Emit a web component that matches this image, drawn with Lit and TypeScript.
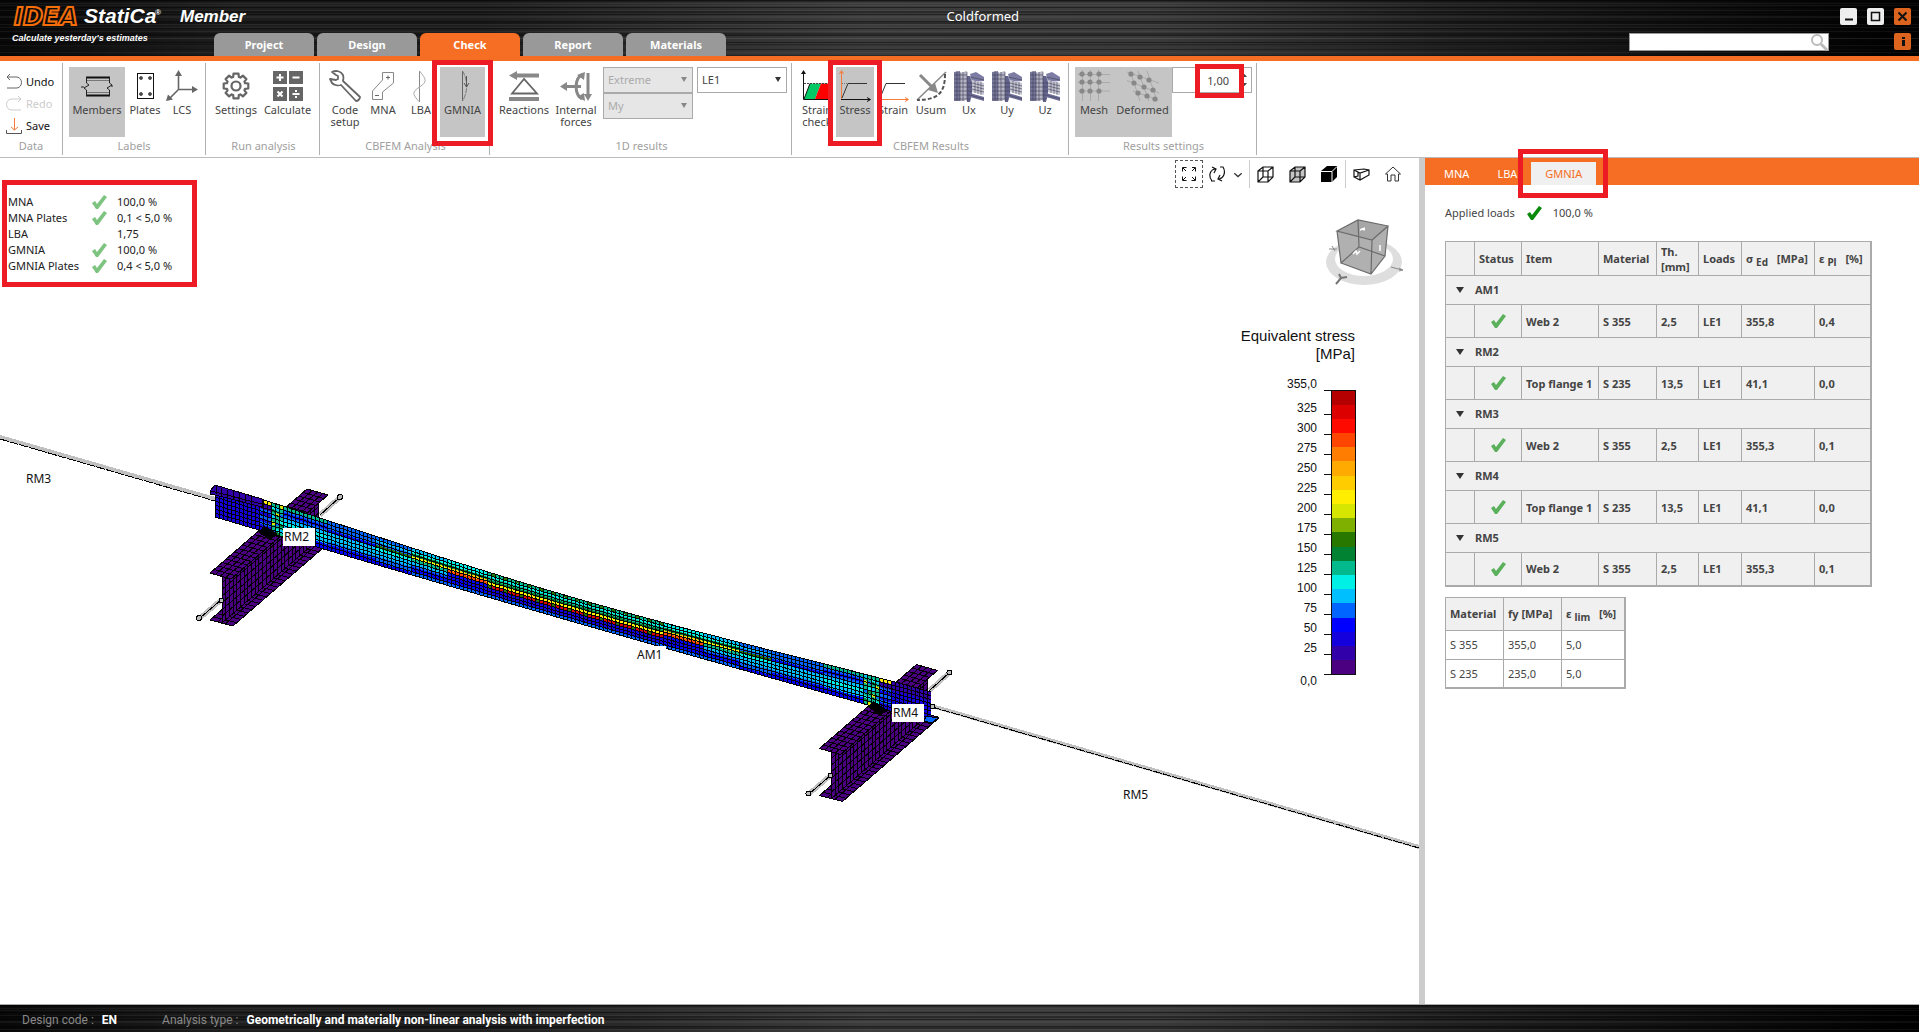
import { LitElement, html, svg, css, nothing } from "lit";
import { customElement } from "lit/decorators.js";
import { classMap } from "lit/directives/class-map.js";

/* ---------- ribbon icons, drawn on a 32 x 32 grid ---------- */

const meshBlock = svg`
  <path d="M1 2l6-1v30H1z" fill="#77779a"/>
  <path d="M7 3l7-2v28l-3 2H7z" fill="#b4b4c4"/>
  <path d="M14 6h3l2 6v12l-2 8h-3z" fill="#62628a"/>
  <path d="M17 4l6-2 8 5v4l-12 1z" fill="#7c7ca4"/>
  <path d="M19 10l12 3v12l-12-3z" fill="#c8c8d4"/>
  <path d="M17 23l14 4v4l-14-4z" fill="#6c6c96"/>
  <path d="M1 5h13M1 9h13M1 13h18M1 17h18M1 21h18M1 25h16M1 29h16M4 1v30M7 2v29M10 2v29M14 2v29M19 13l12 3M19 16l12 3M19 19l12 3M22 11v12M25 12v12M28 12v13M17 7l14 3M17 25l14 4"
    stroke="#3f3f58" stroke-width="0.6" fill="none"/>`;

const gear = (() => {
  const pts: string[] = [];
  for (let i = 0; i < 8; i++) {
    const base = (i * Math.PI) / 4;
    const steps: [number, number][] = [[-0.3, 9.5], [-0.2, 12.5], [0.2, 12.5], [0.3, 9.5]];
    for (const [da, r] of steps) {
      pts.push(`${(16 + r * Math.sin(base + da)).toFixed(1)},${(16 - r * Math.cos(base + da)).toFixed(1)}`);
    }
  }
  return pts.join(" ");
})();

const deformedDots = [
  [[4, 4], [13, 7], [22, 10]],
  [[7, 13], [17, 17], [26, 20]],
  [[11, 23], [20, 26], [28, 29]],
];

const icons: Record<string, unknown> = {
  members: svg`
    <path d="M5 7.5H29M5 25.500H29" stroke="#111" stroke-width="2"/>
    <path d="M5 10.500H29M5 22.500H29" stroke="#777"/>
    <path d="M5.500 7V13L8 15L3 18L5.500 20V26M0 17H3M28.500 7V13L31 15L26 18L28.500 20V26M30 16H32" fill="none" stroke="#222"/>`,
  plates: svg`
    <rect x="8.500" y="3.500" width="16" height="25" fill="none" stroke="#111"/>
    ${[[12, 8], [21, 8], [12, 24], [21, 24]].map(([x, y]) => svg`<circle cx=${x} cy=${y} r="1.500" fill="#555" stroke="#111" stroke-width="0.6"/>`)}`,
  lcs: svg`
    <path d="M12.500 5V19.500H28M12.500 19.500L4 28" fill="none" stroke="#666" stroke-width="1.600"/>
    <path d="M12.500 0L16 6H9zM32 19.500L26 16V23zM0 31L2 24.500L7 29.500z" fill="#666"/>`,
  settings: svg`
    <polygon points=${gear} fill="none" stroke="#666" stroke-width="2.200" stroke-linejoin="round"/>
    <circle cx="16" cy="16" r="4.500" fill="none" stroke="#666" stroke-width="2.200"/>`,
  calculate: svg`
    <path d="M1 1h14v13H1zM17 1h14v13H17zM1 17h14v14H1zM17 17h14v14H17z" fill="#666"/>
    <path d="M4.500 7.500h7M8 4v7M20.500 7.500h7M5.500 21.500l5 5M10.500 21.500l-5 5M20.500 24h7" stroke="#fff" stroke-width="2"/>
    <path d="M23 20h2v2h-2zM23 26h2v2h-2z" fill="#fff"/>`,
  wrench: svg`
    <path d="M3 2C7 0 12 1 14 5C15 8 14 10 14 11L31 27C31 29 29 31 27 31L12 15C9 16 5 15 3 13L1 9L7 10L9 9L9 6L7 5z" fill="none" stroke="#666" stroke-width="1.800" stroke-linejoin="round"/>`,
  mna: svg`
    <path d="M15.500 2.500H26.500V13L15.500 22V29.500H5.500V21L15.500 10z" fill="none" stroke="#888"/>
    <path d="M19 7.500h4M21 5.500v4M8 25.500h4" stroke="#666"/>`,
  lba: svg`
    <path d="M14.500 1V32" stroke="#888"/>
    <path d="M14.500 1C22 10 22 12 14.500 17C7 22 7 24 14.500 32" fill="none" stroke="#aaa"/>`,
  gmnia: svg`
    <path d="M15.500 1V31" stroke="#666"/>
    <path d="M15.500 1C21 10 21 22 15.500 31" fill="none" stroke="#777" stroke-dasharray="5 1"/>
    <path d="M19.500 6V17M17 13l2.500 4l2.500-4" fill="none" stroke="#555"/>`,
  reactions: svg`
    <path d="M8 5.500H31" stroke="#888" stroke-width="4"/><path d="M1 5.500L9 1V10z" fill="#888"/>
    <path d="M16 9L4 23.500H29z" fill="none" stroke="#666" stroke-width="1.800"/>
    <path d="M1 29H31" stroke="#888" stroke-width="4"/>`,
  forces: svg`
    <path d="M6 16.500H21M28 3V27" stroke="#888" stroke-width="3"/>
    <path d="M23 4C14 8 14 24 22 29" fill="none" stroke="#888" stroke-width="3"/>
    <path d="M0 16.500L7 12V21zM17 5L25 2L24 10zM17 27L25 31L24 23zM24 24H32L28 31z" fill="#888"/>`,
  strainCheck: svg`
    <path d="M3 29L9 13.500H20L14 29z" fill="#00c864"/><path d="M14 29L20 13.500H34V29z" fill="#f00"/>
    <path d="M3 13.500H34" stroke="#444" stroke-dasharray="2 1"/>
    <path d="M2.500 3V29.500H34M9 13.500L3 29" fill="none" stroke="#111"/><path d="M2.500 0L5 4H0z" fill="#111"/>`,
  stress: svg`
    <path d="M2.500 2V29" stroke="#f47b3a"/><path d="M0.500 4L2.500 0.500L4.500 4" fill="none" stroke="#f47b3a"/>
    <path d="M2 29.500H31M28 27.500L31.500 29.500L28 31.500" fill="none" stroke="#111"/>
    <path d="M3 28L9 13.500H28" fill="none" stroke="#333"/><path d="M3 13.500H9" stroke="#777" stroke-dasharray="1 1"/>`,
  strain: svg`
    <path d="M2.500 1V29" stroke="#333"/>
    <path d="M2 29.500H31M28 27.500L31.500 29.500L28 31.500" fill="none" stroke="#f47b3a"/>
    <path d="M3 28L9 13.500H28" fill="none" stroke="#333"/>`,
  usum: svg`
    <path d="M31 2L2 30" stroke="#888" stroke-width="1.500"/><path d="M5 5L18 18" stroke="#888" stroke-width="3"/>
    <path d="M23 23L13 20L20 13z" fill="#888"/>
    <path d="M30 4C30 22 24 30 2 30" fill="none" stroke="#555" stroke-width="2" stroke-dasharray="4 2"/>`,
  block: meshBlock,
  mesh: svg`
    <path d="M0 4.500H32M0 12.500H32M0 21H32M4.500 0V31M12.500 0V31M20.500 0V31" stroke="#aaa"/>
    ${[4, 12, 21].map((y) => [4, 12, 21].map((x) => svg`<circle cx=${x} cy=${y} r="2.600" fill="#888"/>`))}`,
  deformed: svg`
    <path d="M0 2L32 13M0 10.500L32 23M6 21L31 30M3 1L13 31M11 1L22 31M20 1L30 31" stroke="#aaa"/>
    ${deformedDots.flat().map(([x, y]) => svg`<circle cx=${x} cy=${y} r="2.600" fill="#888"/>`)}`,
};

const check = svg`<path d="M1 9L4 7L6 10L13 1L16 3L7 15H5z" fill="currentColor"/>`;
const tick = (cls: string) => html`<svg class="tick ${cls}" viewBox="0 0 17 16" role="img" aria-label="OK">${check}</svg>`;

interface Tool { icon: string; label: string; width: number; on?: boolean; marked?: boolean }

const labelTools: Tool[] = [
  { icon: "members", label: "Members", width: 56, on: true },
  { icon: "plates", label: "Plates", width: 40 },
  { icon: "lcs", label: "LCS", width: 34 },
];
const runTools: Tool[] = [
  { icon: "settings", label: "Settings", width: 48 },
  { icon: "calculate", label: "Calculate", width: 55 },
];
const analysisTools: Tool[] = [
  { icon: "wrench", label: "Code setup", width: 38 },
  { icon: "mna", label: "MNA", width: 38 },
  { icon: "lba", label: "LBA", width: 38 },
  { icon: "gmnia", label: "GMNIA", width: 45, on: true, marked: true },
];
const resultTools: Tool[] = [
  { icon: "reactions", label: "Reactions", width: 56 },
  { icon: "forces", label: "Internal forces", width: 48 },
];
const cbfemTools: Tool[] = [
  { icon: "strainCheck", label: "Strain check", width: 38 },
  { icon: "stress", label: "Stress", width: 38, on: true, marked: true },
  { icon: "strain", label: "Strain", width: 38 },
  { icon: "usum", label: "Usum", width: 38 },
  { icon: "block", label: "Ux", width: 38 },
  { icon: "block", label: "Uy", width: 38 },
  { icon: "block", label: "Uz", width: 38 },
];
const settingTools: Tool[] = [
  { icon: "mesh", label: "Mesh", width: 38, on: true },
  { icon: "deformed", label: "Deformed", width: 59, on: true },
];

@customElement("app-ribbon")
class AppRibbon extends LitElement {
  static styles = css`
    :host { display: block; background: #fff; border-bottom: 1px solid #bbb; }
    .bar { display: flex; padding: 2px 0; }
    .group { display: flex; flex-direction: column; border-right: 1px solid #b0b0b0; padding: 4px 4px 0 6px; }
    .even { padding-right: 6px; }
    .row { display: flex; height: 70px; align-items: flex-start; }
    .caption { text-align: center; line-height: 18px; height: 18px; color: #a0a0a0; }
    button { font: inherit; color: #444; background: none; border: 0; padding: 0; margin: 0; }
    .tool { position: relative; display: flex; flex-direction: column; align-items: center; gap: 2px; height: 70px; padding-top: 3px; line-height: 12px; flex: none; }
    .tool svg { width: 32px; height: 32px; flex: none; }
    .on { background: #c5c5c5; }
    .marked { z-index: 2; box-shadow: 0 0 0 3px #fff; }
    .marked::after { content: ""; position: absolute; inset: -7px -8px -9px -8px; border: 5px solid #ed1c24; }
    .data { width: 62px; padding: 8px 0 0; }
    .small { display: flex; align-items: center; gap: 4px; height: 22px; padding-left: 6px; color: #111; }
    .small svg { width: 16px; height: 16px; }
    .small:disabled { color: #ccc; }
    .dataRows { height: 66px; }
    .combo { position: relative; display: block; width: 90px; height: 26px; margin-left: 3px; }
    .combo::after { content: ""; position: absolute; right: 6px; top: 10px; border: 3px solid transparent; border-top: 5px solid #333; border-bottom: 0; pointer-events: none; }
    .combo.off::after { border-top-color: #888; }
    select { appearance: none; box-sizing: border-box; width: 90px; height: 26px; border: 1px solid #aaa; border-radius: 0; background: #fff; color: #444; font: inherit; padding: 0 4px; opacity: 1; }
    select:disabled { background: #e6e6e6; color: #aaa; opacity: 1; }
    .case { margin-left: 4px; }
    .spin { position: relative; width: 80px; height: 26px; }
    .spin input { box-sizing: border-box; width: 80px; height: 26px; border: 1px solid #aaa; font: inherit; color: #444; padding: 0 22px 0 0; text-align: right; }
    .spin::after { content: ""; position: absolute; left: 23px; top: -3px; width: 39px; height: 24px; border: 5px solid #ed1c24; pointer-events: none; }
    .spin svg { position: absolute; right: 5px; top: 6px; width: 5px; height: 14px; }
  `;

  private tools(list: Tool[]) {
    return list.map((t) => html`
      <button class=${classMap({ tool: true, on: !!t.on, marked: !!t.marked })} style="width:${t.width}px" aria-pressed=${t.on ? "true" : "false"}>
        <svg viewBox="0 0 32 32" aria-hidden="true">${icons[t.icon]}</svg><span>${t.label}</span>
      </button>`);
  }

  render() {
    return html`<div class="bar">
      <section class="group data">
        <div class="dataRows">
          <button class="small"><svg viewBox="0 0 16 16"><path d="M1 3H11C17 4 17 13 11 14H1M4 0L1 3L4 6" fill="none" stroke="#666"/></svg>Undo</button>
          <button class="small" disabled><svg viewBox="0 0 16 16"><path d="M15 3H5C-1 4 -1 13 5 14H15M12 0L15 3L12 6" fill="none" stroke="#ccc"/></svg>Redo</button>
          <button class="small"><svg viewBox="0 0 16 16"><path d="M0.500 12V15.500H15.500V12" fill="none" stroke="#555"/><path d="M8.500 0V12M5 9L8.500 12L12 9" fill="none" stroke="#f47b3a"/></svg>Save</button>
        </div>
        <div class="caption">Data</div>
      </section>
      <section class="group even"><div class="row">${this.tools(labelTools)}</div><div class="caption">Labels</div></section>
      <section class="group"><div class="row">${this.tools(runTools)}</div><div class="caption">Run analysis</div></section>
      <section class="group"><div class="row">${this.tools(analysisTools)}</div><div class="caption">CBFEM Analysis</div></section>
      <section class="group">
        <div class="row">
          ${this.tools(resultTools)}
          <div>
            <label class="combo off"><select disabled aria-label="Evaluation"><option>Extreme</option></select></label>
            <label class="combo off"><select disabled aria-label="Component"><option>My</option></select></label>
          </div>
          <label class="combo case"><select aria-label="Load effect"><option>LE1</option></select></label>
        </div>
        <div class="caption">1D results</div>
      </section>
      <section class="group"><div class="row">${this.tools(cbfemTools)}</div><div class="caption">CBFEM Results</div></section>
      <section class="group">
        <div class="row">
          ${this.tools(settingTools)}
          <div class="spin"><input aria-label="Deformation scale" value="1,00"><svg viewBox="0 0 5 14"><path d="M2.500 1L5 4H0zM2.500 13L5 10H0z" fill="#444"/></svg></div>
        </div>
        <div class="caption">Results settings</div>
      </section>
    </div>`;
  }
}

/* ---------- finite element model ---------- */

const palette = ["#4b0082", "#3200a8", "#1400dc", "#0000ff", "#0064ff", "#00bfff", "#00f0e6", "#00b98c", "#008232", "#287800", "#7fb000", "#d7e600", "#ffee00", "#ffcc00", "#ffaa00", "#ff7d00", "#ff4600", "#ff0a00", "#dc0000", "#b40000"];

type Pt = [number, number];
const mix = (a: Pt, b: Pt, t: number): Pt => [a[0] + (b[0] - a[0]) * t, a[1] + (b[1] - a[1]) * t];
const f = (p: Pt) => `${p[0].toFixed(1)} ${p[1].toFixed(1)}`;

/* A meshed quadrilateral of one colour: a-b and d-c are the long edges. */
function plate(a: Pt, b: Pt, c: Pt, d: Pt, nu: number, nv: number, fill: string) {
  let lines = "";
  for (let i = 0; i <= nu; i++) lines += `M${f(mix(a, b, i / nu))}L${f(mix(d, c, i / nu))}`;
  for (let j = 0; j <= nv; j++) lines += `M${f(mix(a, d, j / nv))}L${f(mix(b, c, j / nv))}`;
  return svg`<path d="M${f(a)}L${f(b)}L${f(c)}L${f(d)}z" fill=${fill}/><path d=${lines} fill="none" stroke="#000"/>`;
}

function support(dx: number, dy: number) {
  const p = (x: number, y: number): Pt => [x + dx, y + dy];
  const purple = palette[0];
  const rods = `M${f(p(200, 618))}L${f(p(221, 600))}M${f(p(320, 515))}L${f(p(339, 498))}`;
  return svg`
    ${plate(p(210, 620), p(307, 536), p(330, 542), p(233, 626), 26, 3, purple)}
    ${plate(p(222, 576), p(318, 494), p(318, 540), p(222, 623), 26, 7, purple)}
    ${plate(p(210, 573), p(307, 489), p(328, 495), p(231, 579), 24, 4, purple)}
    <path d=${rods} stroke="#c0c0c0" stroke-width="5"/>
    <path d=${rods} stroke="#000"/>
    <circle cx=${199 + dx} cy=${618 + dy} r="2.500" fill="#bbb" stroke="#000"/>
    <circle cx=${340 + dx} cy=${497 + dy} r="2.500" fill="#bbb" stroke="#000"/>
    <rect x=${219 + dx} y=${598 + dy} width="4" height="4" fill="#bbb" stroke="#000"/>`;
}

const X0 = 215, X1 = 932;
const sag = (x: number) => Math.max(0, Math.sin((Math.PI * (x - X0)) / (X1 - X0)));
const topEdge = (x: number) => 485 + (x - X0) * 0.289 + 9 * sag(x) ** 1.5;
const bottomEdge = (x: number) => 517 + (x - X0) * 0.287 + 2 * sag(x);

/* Stress bands from the top edge (0) to the bottom edge (9) for each stretch, by distance from the nearer end. */
const stretches: [number, number[]][] = [
  [42, [1, 1, 1, 2, 2, 2, 2, 2, 2, 2]],
  [54, [12, 1, 1, 4, 2, 4, 2, 4, 2, 2]],
  [68, [7, 4, 7, 6, 8, 7, 5, 7, 11, 7]],
  [110, [7, 4, 3, 4, 5, 6, 5, 5, 3, 3]],
  [160, [4, 4, 4, 3, 5, 5, 5, 4, 3, 3]],
  [195, [4, 5, 4, 9, 6, 5, 5, 4, 4, 3]],
  [230, [5, 6, 8, 12, 7, 5, 4, 3, 3, 4]],
  [270, [6, 6, 8, 13, 16, 3, 2, 3, 3, 4]],
  [999, [9, 6, 7, 8, 12, 18, 2, 2, 2, 4]],
];

function band(x: number, j: number, i: number): number {
  const s = Math.min(x - X0, 930 - x);
  const row = stretches.find(([end]) => s < end)![1];
  const k = row[j];
  if (s > 54 && s < 68) return row[(j + i * 3) % 10];
  if (k === 9 && j === 0 && i % 3) return 7;
  if (k === 18 && i % 4 === 0) return 9;
  return k;
}

function beam() {
  const rows = 10, meshRows = 8, step = 4;
  const fills = new Map<number, string>();
  let lines = "";
  const at = (x: number, v: number): Pt => [x, topEdge(x) + (bottomEdge(x) - topEdge(x)) * v];
  const count = Math.floor((X1 - X0) / step);
  for (let i = 0; i < count; i++) {
    const xa = X0 + i * step, xb = xa + step;
    for (let j = 0; j < rows; j++) {
      const k = band(xa, j, i);
      const q = `M${f(at(xa, j / rows))}L${f(at(xb, j / rows))}L${f(at(xb, (j + 1) / rows))}L${f(at(xa, (j + 1) / rows))}z`;
      fills.set(k, (fills.get(k) ?? "") + q);
    }
    lines += `M${f(at(xa, 0))}L${f(at(xa, 1))}`;
  }
  for (let j = 0; j <= meshRows; j++) {
    lines += `M${f(at(X0, j / meshRows))}`;
    for (let i = 1; i <= count; i++) lines += `L${f(at(X0 + i * step, j / meshRows))}`;
  }
  return svg`${[...fills].map(([k, d]) => svg`<path d=${d} fill=${palette[k]}/>`)}
    <path d=${lines} fill="none" stroke="#000"/>
    <path d="M210 491L215 485L262 499L262 507L215 495L210 494z" fill="#3200a8" stroke="#000"/>
    <path d="M211 491L262 504M216 486V494M221 488V496M227 490V498M233 491V499M239 493V501M245 495V502M251 496V504" stroke="#000" fill="none"/>`;
}

const rod = (back: string, line: string) => svg`<path d=${back} stroke="#c0c0c0" stroke-width="4"/><path d=${line} stroke="#000" stroke-dasharray="9 1"/>`;

const legend = ["355,0", "325", "300", "275", "250", "225", "200", "175", "150", "125", "100", "75", "50", "25", "0,0"];

const cubeLines = "M1 5L6 1H16V11L11 16H1zM1 5H11V16M11 5L16 1M6 1V11L1 16M6 11H16";

const viewTools = [
  { name: "Zoom to fit", cls: "fit", art: svg`<path d="M1.500 5.500V1.500H5.500M2 2L5 5M11 1.500H14.500V5.500M14 2L11 5M1.500 10.500V14.500H5.500M2 14L5 11M14.500 10.500V14.500H10.500M14 14L11 11" fill="none" stroke="#111"/>` },
  { name: "Rotate", cls: "turn", art: svg`<path d="M3 15C-1 10 1 4 6 3M3 1L7 3L5 7M2 15H6M11 1H14C17 6 15 12 10 13M13 15L9 13L11 9" fill="none" stroke="#111" stroke-width="1.200"/>` },
  { name: "Rotate options", cls: "more", art: svg`<path d="M4 7L8.500 11L13 7" fill="none" stroke="#333" stroke-width="1.500"/>` },
  { name: "Wireframe", cls: "view rule", art: svg`<path d=${cubeLines} fill="none" stroke="#111" stroke-width="1.200"/>` },
  { name: "Transparent", cls: "view", art: svg`<path d="M1 5L6 1H16V11L11 16H1z" fill="#c4c4c4"/><path d=${cubeLines} fill="none" stroke="#111" stroke-width="1.200"/>` },
  { name: "Solid", cls: "view", art: svg`<path d="M0 5L6 0H16V11L11 16H0z" fill="#000"/><path d="M0 5.500H11L16 0.500M11 5.500V16" fill="none" stroke="#fff"/>` },
  { name: "Clipping", cls: "view rule", art: svg`<path d="M1 4L11 3L16 4V9L7 14L1 11zM1 4L7 7L16 4M7 7V14M5 6V10L1 11" fill="none" stroke="#111" stroke-width="1.200"/>` },
  { name: "Home view", cls: "view", art: svg`<path d="M0.500 8L8 1L15.500 8H13.500V15H10V9H6V15H2.500V8z" fill="none" stroke="#333"/>` },
];

const summary = [
  { name: "MNA", ok: true, value: "100,0 %" },
  { name: "MNA Plates", ok: true, value: "0,1 < 5,0 %" },
  { name: "LBA", ok: false, value: "1,75" },
  { name: "GMNIA", ok: true, value: "100,0 %" },
  { name: "GMNIA Plates", ok: true, value: "0,4 < 5,0 %" },
];

@customElement("model-view")
class ModelView extends LitElement {
  static styles = css`
    :host { display: block; position: relative; overflow: hidden; background: #fff; }
    .scene { position: absolute; left: 0; top: 0; width: 1419px; height: 845px; }
    .scene text { font-size: 12px; fill: #111; }
    .tools { position: relative; display: flex; justify-content: flex-end; align-items: center; padding: 2px 10px 0 0; }
    button { background: none; border: 0; padding: 0; height: 28px; display: flex; align-items: center; justify-content: center; }
    button svg { width: 17px; height: 17px; }
    .fit { box-sizing: border-box; width: 28px; border: 1px dashed #555; }
    .turn { width: 28px; }
    .more { width: 14px; margin-right: 4px; }
    .view { box-sizing: border-box; width: 32px; }
    .rule { border-left: 1px solid #ccc; }
    .summary { position: absolute; left: 2px; top: 22px; width: 185px; height: 97px; border: 5px solid #ed1c24; }
    .lines { display: grid; grid-template-columns: 83px 26px 1fr; margin: 9px 0 0 1px; line-height: 16px; grid-auto-rows: 16px; color: #222; }
    .tick { width: 17px; height: 16px; color: #7cc47f; }
    .cube { position: absolute; right: 14px; top: 60px; width: 80px; height: 72px; }
    .legend { position: absolute; right: 60px; top: 165px; width: 130px; height: 370px; font-family: "Liberation Sans", Arial, sans-serif; }
    .legend text { text-anchor: end; font-size: 12px; fill: #111; }
    .legend .title { font-size: 15px; }
  `;

  render() {
    return html`
      <svg class="scene" viewBox="0 158 1419 845" role="img" aria-label="Equivalent stress on member">
        <g shape-rendering="crispEdges">
          ${rod("M0 437L215 499", "M0 439L215 501")}${rod("M932 706L1419 847", "M932 707L1419 848")}
          ${support(0, 0)}${support(609.5, 175.5)}
          ${beam()}
          <path d="M258 532L264 526L278 534L270 540zM868 707L873 701L888 710L880 716z" fill="#000"/>
          <path d="M926 716l12 2l-6 5l-8-2z" fill="#0064ff" stroke="#000"/>
          <rect x="930" y="704" width="4" height="4" fill="#bbb" stroke="#000"/>
        </g>
        <path d="M283 528h32v18h-32zM892 704h32v18h-32zM636 646h30v18h-30z" fill="#fff"/>
        <text x="284" y="541">RM2</text><text x="893" y="717">RM4</text>
        <text x="637" y="659">AM1</text><text x="26" y="483">RM3</text><text x="1123" y="799">RM5</text>
      </svg>
      <div class="tools">${viewTools.map((t) => html`<button class=${t.cls} aria-label=${t.name}><svg viewBox="0 0 17 17">${t.art}</svg></button>`)}</div>
      <div class="summary"><div class="lines">
        ${summary.map((r) => html`<span>${r.name}</span><span>${r.ok ? tick("") : nothing}</span><span>${r.value}</span>`)}
      </div></div>
      <svg class="cube" viewBox="0 0 80 72" role="img" aria-label="View cube">
        <path fill-rule="evenodd" fill="#dedede" d="M1 44a38 23 0 1 0 76 0a38 23 0 1 0 -76 0zM10 41a29 17 0 1 0 58 0a29 17 0 1 0 -58 0z"/>
        <path d="M12 13L33 2L63 8L60 38L46 56L16 45z" fill="#b0b0b0"/>
        <path d="M12 13L33 2L63 8L47 22z" fill="#a6a6a6"/>
        <path d="M12 13L33 2L63 8L47 22zM16 45L46 56L60 38L34 29zM12 13L16 45M33 2L34 29M63 8L60 38M47 22L46 56" fill="none" stroke="#6c6c6c" stroke-width="1.200"/>
        <path d="M35 12l5-2M37 11l3 1M28 36l3-3l1 3l3-3M55 27v6" stroke="#fff" stroke-width="1.500" fill="none"/>
        <path d="M4 31h8M7 28l3 5M66 49l11 3M74 50l4 2l-4 1" stroke="#888" fill="none"/>
        <path d="M11 66L16 60L22 59M14 56l2 4" fill="none" stroke="#777" stroke-width="2"/>
      </svg>
      <svg class="legend" viewBox="1229 323 130 370" role="img" aria-label="Stress legend">
        <text class="title" x="1355" y="341">Equivalent stress</text>
        <text class="title" x="1355" y="359">[MPa]</text>
        <g shape-rendering="crispEdges">
          ${palette.map((c, i) => svg`<rect x="1331" y=${(390 + (19 - i) * 14.2).toFixed(1)} width="24" height="14.500" fill=${c}/>`)}
          <rect x="1331.500" y="390.500" width="24" height="283.500" fill="none" stroke="#111"/>
          ${legend.map((_, i) => svg`<rect x="1324" y=${i === 0 ? 390 : 394 + i * 20} width="7" height="1" fill="#111"/>`)}
        </g>
        ${legend.map((t, i) => svg`<text x="1317" y=${i === 0 ? 388 : i === 14 ? 685 : 392 + i * 20}>${t}</text>`)}
      </svg>`;
  }
}

const plates = [
  { member: "AM1", item: "Web 2", mat: "S 355", th: "2,5", sigma: "355,8", eps: "0,4" },
  { member: "RM2", item: "Top flange 1", mat: "S 235", th: "13,5", sigma: "41,1", eps: "0,0" },
  { member: "RM3", item: "Web 2", mat: "S 355", th: "2,5", sigma: "355,3", eps: "0,1" },
  { member: "RM4", item: "Top flange 1", mat: "S 235", th: "13,5", sigma: "41,1", eps: "0,0" },
  { member: "RM5", item: "Web 2", mat: "S 355", th: "2,5", sigma: "355,3", eps: "0,1" },
];

@customElement("result-panel")
class ResultPanel extends LitElement {
  static styles = css`
    :host { display: block; background: #fff; color: #444; }
    .tabs { display: flex; align-items: flex-end; height: 27px; background: #f56e23; padding-left: 5px; }
    .tabs button { position: relative; height: 23px; border: 0; padding: 0 14px; font: inherit; color: #fff; background: none; }
    .tabs .active { width: 65px; padding: 0; background: #f0f0f0; color: #f56e23; }
    .active::after { content: ""; position: absolute; inset: -13px -12px -13px -13px; border: 5px solid #ed1c24; }
    .loads { display: flex; align-items: center; padding: 20px 0 0 20px; height: 16px; }
    .tick { width: 17px; height: 16px; color: #5bb05b; display: block; margin: 0 auto; }
    .tick.strong { color: #0a8a0a; margin: 0 10px 0 11px; }
    table { border-collapse: collapse; table-layout: fixed; margin-left: 20px; border: 1px solid #aaa; border-right-width: 2px; border-bottom-width: 2px; }
    .plates { width: 425px; margin-top: 20px; background: #f0f0f0; font-weight: bold; }
    .limits { width: 179px; margin-top: 10px; }
    .limits th { background: #f0f0f0; }
    th, td { border: 1px solid #aaa; padding: 0 0 0 4px; text-align: left; line-height: 15px; box-sizing: border-box; white-space: nowrap; }
    .head { height: 34px; }
    .item { height: 33px; }
    .member, .limit { height: 29px; }
    .center { text-align: center; padding: 0; }
    sub { font-size: 10px; line-height: 10px; vertical-align: -3px; margin-right: 6px; }
    .fold { font: inherit; color: inherit; border: 0; background: none; padding: 0 0 1px 6px; display: flex; align-items: center; gap: 11px; }
    .fold::before { content: ""; border: 4px solid transparent; border-top: 6px solid #333; border-bottom: 0; }
  `;

  render() {
    return html`
      <nav class="tabs"><button>MNA</button><button>LBA</button><button class="active">GMNIA</button></nav>
      <div class="loads"><span>Applied loads</span>${tick("strong")}<span>100,0 %</span></div>
      <table class="plates">
        <colgroup>${[29, 47, 77, 58, 42, 43, 73, 56].map((w) => html`<col style="width:${w}px">`)}</colgroup>
        <thead><tr class="head"><th></th><th>Status</th><th>Item</th><th>Material</th><th>Th.<br>[mm]</th><th>Loads</th><th>σ <sub>Ed</sub> [MPa]</th><th>ε <sub>Pl</sub> [%]</th></tr></thead>
        <tbody>${plates.map((p) => html`
          <tr class="member"><td colspan="8"><button class="fold" aria-expanded="true">${p.member}</button></td></tr>
          <tr class="item"><td></td><td class="center">${tick("")}</td><td>${p.item}</td><td>${p.mat}</td><td>${p.th}</td><td>LE1</td><td>${p.sigma}</td><td>${p.eps}</td></tr>`)}
        </tbody>
      </table>
      <table class="limits">
        <colgroup>${[58, 58, 63].map((w) => html`<col style="width:${w}px">`)}</colgroup>
        <thead><tr class="item"><th>Material</th><th>fy [MPa]</th><th>ε <sub>lim</sub> [%]</th></tr></thead>
        <tbody>
          <tr class="limit"><td>S 355</td><td>355,0</td><td>5,0</td></tr>
          <tr class="limit"><td>S 235</td><td>235,0</td><td>5,0</td></tr>
        </tbody>
      </table>`;
  }
}

@customElement("app-root")
class AppRoot extends LitElement {
  static styles = css`
    :host { display: flex; flex-direction: column; height: 100vh; overflow: hidden; font-family: "Noto Sans", "Open Sans", sans-serif; font-size: 11px; line-height: 16px; }
    .brushed {
      background:
        repeating-linear-gradient(180deg, rgba(0,0,0,.45) 0 1px, transparent 1px 3px, rgba(255,255,255,.05) 3px 4px, transparent 4px 7px),
        repeating-linear-gradient(180deg, rgba(0,0,0,.3) 0 2px, transparent 2px 5px, rgba(255,255,255,.05) 5px 6px, transparent 6px 11px),
        linear-gradient(90deg, #080808, #1e1e1e 12%, #1e1e1e 25%, #3c3c3c 45%, #3a3a3a 60%, #202020 75%, #0a0a0a 92%, #000);
    }
    header { display: flex; justify-content: space-between; height: 56px; border-bottom: 5px solid #f56e23; flex: none; }
    .left { display: flex; }
    .brand { width: 214px; }
    .logo { display: block; width: 260px; height: 50px; overflow: visible; font-family: "Liberation Sans", Arial, sans-serif; font-style: italic; font-weight: bold; fill: #fff; }
    .idea { font-family: "DejaVu Sans", sans-serif; fill: #0c0c0c; stroke: #f56e0a; stroke-width: 2px; }
    .tabs { display: flex; gap: 3px; align-items: flex-end; }
    .tabs button { width: 100px; height: 23px; border: 0; border-radius: 6px 6px 0 0; background: #999; color: #fff; font: inherit; font-weight: bold; padding: 0; }
    .tabs .active { background: #f56e23; }
    h1 { margin: 0; padding-top: 6px; font-size: 13px; line-height: 20px; font-weight: normal; color: #fff; width: 462px; }
    .right { display: grid; grid-template-columns: 200px 82px; column-gap: 0; row-gap: 8px; padding: 8px 8px 0 0; align-content: start; }
    .windows { grid-column: 2; display: flex; justify-content: flex-end; gap: 10px; }
    .windows button, .info { width: 17px; height: 17px; border: 0; padding: 0; border-radius: 2px; background: #eee; display: flex; }
    .windows .close, .info { background: #dc641e; }
    .windows svg, .info svg { width: 17px; height: 17px; }
    .info { justify-self: end; }
    .search { position: relative; height: 18px; display: block; }
    .search input { box-sizing: border-box; width: 200px; height: 18px; border: 1px solid #999; padding: 0 20px 0 4px; background: #fff; display: block; font: inherit; }
    .search svg { position: absolute; right: 1px; top: 0; width: 17px; height: 18px; }
    main { display: flex; flex: 1; min-height: 0; }
    model-view { flex: 1; min-width: 0; }
    .splitter { width: 6px; background: #ccc; flex: none; }
    result-panel { width: 494px; flex: none; }
    footer { flex: none; height: 28px; border-top: 1px solid #aaa; display: flex; align-items: center; padding: 2px 0 0 22px; box-sizing: border-box; font-family: Roboto, Lato, sans-serif; font-size: 12px; color: #888; }
    footer b { color: #fff; margin: 0 45px 0 8px; }
  `;

  render() {
    return html`
      <header class="brushed">
        <div class="left">
          <div class="brand"><svg class="logo" viewBox="0 0 260 50" role="img" aria-label="IDEA StatiCa Member">
            <text class="idea" x="14" y="25" font-size="24">IDEA</text>
            <text x="84" y="23" font-size="21">StatiCa</text><text x="155" y="15" font-size="8">®</text>
            <text x="180" y="22" font-size="17">Member</text>
            <text x="12" y="41" font-size="9">Calculate yesterday's estimates</text>
          </svg></div>
          <nav class="tabs">
            ${["Project", "Design", "Check", "Report", "Materials"].map((t) => html`<button class=${classMap({ active: t === "Check" })}>${t}</button>`)}
          </nav>
        </div>
        <h1>Coldformed</h1>
        <div class="right">
          <div class="windows">
            <button aria-label="Minimize"><svg viewBox="0 0 17 17"><path d="M5 11.500H13" stroke="#111" stroke-width="2"/></svg></button>
            <button aria-label="Maximize"><svg viewBox="0 0 17 17"><rect x="4.500" y="4.500" width="8" height="8" fill="none" stroke="#111" stroke-width="1.500"/></svg></button>
            <button class="close" aria-label="Close"><svg viewBox="0 0 17 17"><path d="M4.500 4.500L12.500 12.500M12.500 4.500L4.500 12.500" stroke="#111" stroke-width="2"/></svg></button>
          </div>
          <label class="search"><input type="search" aria-label="Search"><svg viewBox="0 0 17 18"><circle cx="6" cy="7" r="5" fill="none" stroke="#bbb" stroke-width="2"/><path d="M10 11L16 17" stroke="#bbb" stroke-width="3"/></svg></label>
          <button class="info" aria-label="Information"><svg viewBox="0 0 17 17"><path d="M8 4h3v2H8zM8 7h3v6H8z" fill="#111"/></svg></button>
        </div>
      </header>
      <app-ribbon></app-ribbon>
      <main><model-view></model-view><div class="splitter"></div><result-panel></result-panel></main>
      <footer class="brushed"><span>Design code :</span><b>EN</b><span>Analysis type :</span><b>Geometrically and materially non-linear analysis with imperfection</b></footer>`;
  }
}
